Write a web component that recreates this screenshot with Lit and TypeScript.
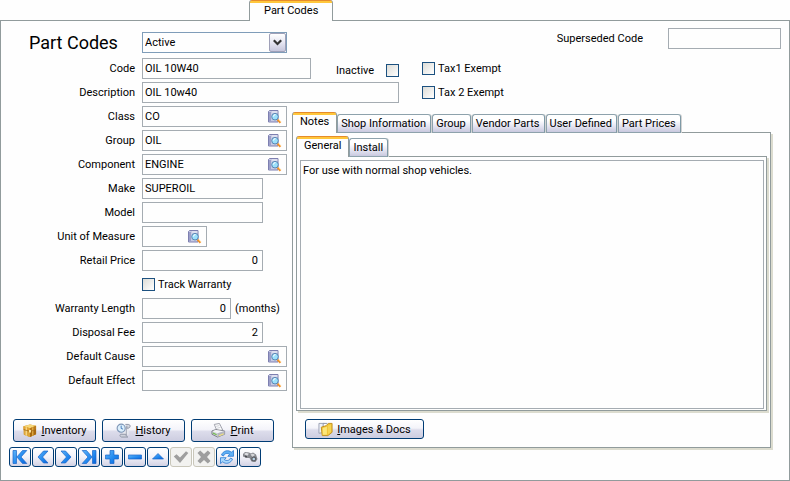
import { LitElement, html, css, svg, type TemplateResult } from "lit";
import { customElement } from "lit/decorators.js";
import { classMap } from "lit/directives/class-map.js";

const magnifier = html`<svg width="14" height="14" viewBox="0 0 14 14" aria-hidden="true">
  <path d="M.5 1.500L1.500.5h8.500v11.500H.5z" fill="#c9cbe4" stroke="#7d7fb0" />
  <path d="M1 2h2v9.500H1z" fill="#9c9fc9" />
  <path d="M4 1.500h5.500v1H4z" fill="#f1f1fa" />
  <path d="M9.500 9.500l3 3.200" stroke="#f0922b" stroke-width="2.200" />
  <path d="M10.500 9.500l2.500 2.500" stroke="#ffd08a" />
  <circle cx="7" cy="6.700" r="3.300" fill="#9be0fb" stroke="#5a86b4" />
  <path d="M5.500 6.500a2 2 0 0 1 2-2" stroke="#fff" fill="none" />
</svg>`;

const chest = html`<svg width="15" height="15" viewBox="0 0 16 16" aria-hidden="true">
  <path d="M1.500 3.500l7-2L15 3v9l-6.500 3L2 12.500z" fill="#c98a1d" />
  <path d="M1.500 3.500l7-2L15 3 8.500 5.500z" fill="#f6d77a" />
  <path d="M1.500 3.500l7 2V8.500L1.500 6.500z" fill="#e3a534" />
  <path d="M8.500 5.500L15 3v3.500l-6.500 2z" fill="#b9781c" />
  <path d="M2 7.500l6.500 1.500v6L2 12.500z" fill="#dca53a" />
  <path d="M8.500 9L15 7v5l-6.500 3z" fill="#a8690f" />
  <path d="M4.500 4.500v9" stroke="#fbe39c" stroke-width="1.200" />
  <path d="M11.500 4.500v9" stroke="#e9b850" stroke-width="1.200" />
  <path d="M1.500 7l7 2L15 7" fill="none" stroke="#9a6418" stroke-width=".7" />
  <path d="M7.500 7.500h2v2.500h-2z" fill="#fff0b0" />
</svg>`;

const scroll = html`<svg width="15" height="15" viewBox="0 0 16 16" aria-hidden="true">
  <path d="M6 2h7.500v10.500H7z" fill="#e8e9ef" />
  <path d="M11 5v8.500" stroke="#9ea3b2" />
  <path d="M10 1.500h3c3 0 2.500 4 0 4h-1.500V3" fill="#d3d6e0" stroke="#8d93a3" />
  <path d="M5.500 12h5c0 1.500 1 2.500 2 3H6c-2 0-2.500-3-.5-3z" fill="#cfd2dc" stroke="#8d93a3" />
  <circle cx="5.500" cy="5.500" r="4.300" fill="#dceffc" stroke="#7e96b6" stroke-width="1.200" />
  <path d="M5.500 2.800v3l2 .7" fill="none" stroke="#3f76b8" />
</svg>`;

const printer = html`<svg width="15" height="15" viewBox="0 0 16 16" aria-hidden="true">
  <path d="M3.500 1.500l5.500-1 3.500 7-6 1z" fill="#fff" stroke="#9a9ca6" />
  <path d="M5.500 3.500l3.500-.7M6.500 5.500l3.500-.7" stroke="#c9cbd3" />
  <path d="M1 8.500L5 7l9.500 1.500v3.500L7 15l-6-3z" fill="#cfcfd6" stroke="#7c7e88" />
  <path d="M1.500 8.700L5 7.400l9 1.300L7 11z" fill="#f3f3f6" />
  <path d="M7 11l7.500-2.500V12L7 15z" fill="#b5b6c0" />
  <path d="M2 10.700l4 1.800" stroke="#6fc04a" stroke-width="1.200" />
  <path d="M8.500 13.500l5-2" stroke="#f3e27a" stroke-width="1.200" />
</svg>`;

const folder = html`<svg width="15" height="15" viewBox="0 0 16 16" aria-hidden="true">
  <path d="M1 1.500h5.500v9.500L1 12z" fill="#eef0f6" stroke="#9aa1b3" />
  <path d="M5.500 1.500h4l1 1.500v8h-5z" fill="#fff" stroke="#8d93a3" />
  <path d="M3.500 5.500l5-1.500L11 1.500h4v9.500l-4.500 3.500h-6z" fill="#efc235" stroke="#c28f1c" />
  <path d="M5 6.500l4.500-1.500v8.500H5z" fill="#fbe67a" />
  <path d="M10.500 4L14 2.500v8l-3.500 3z" fill="#f6d452" />
</svg>`;

const blue = (shape: TemplateResult) => html`<svg width="16" height="16" viewBox="0 0 16 16" aria-hidden="true">
  <defs>
    <linearGradient id="b" x1="0" y1="0" x2="1" y2="1">
      <stop offset="0" stop-color="#5fb4f8" />
      <stop offset=".6" stop-color="#1f86ee" />
      <stop offset="1" stop-color="#0a62d8" />
    </linearGradient>
  </defs>
  <g fill="url(#b)" stroke="#1a66c8" stroke-width=".7">${shape}</g>
</svg>`;

interface Tool {
  name: string;
  icon: TemplateResult;
  disabled?: boolean;
}

const tools: Tool[] = [
  { name: "First", icon: blue(svg`<path d="M1 1.500h3.500v13H1z M10.500 1.500h4.300L9 8l5.800 6.500h-4.300L4.900 8z" />`) },
  { name: "Previous", icon: blue(svg`<path d="M8.500 2H13L7.500 8l5.500 6H8.500L3 8z" />`) },
  { name: "Next", icon: blue(svg`<path d="M3 2h4.500L13 8l-5.500 6H3l5.500-6z" />`) },
  { name: "Last", icon: blue(svg`<path d="M11.500 1.500H15v13h-3.500z M1.200 1.500h4.300L11.100 8l-5.600 6.500H1.200L7 8z" />`) },
  { name: "Add", icon: blue(svg`<path d="M6 1.500h4V6h4.500v4H10v4.500H6V10H1.500V6H6z" />`) },
  { name: "Remove", icon: blue(svg`<path d="M1.500 6h13v4h-13z" />`) },
  { name: "Edit", icon: blue(svg`<path d="M8 4.500l5.500 5.500h-11z" />`) },
  {
    name: "Post",
    disabled: true,
    icon: html`<svg width="16" height="16" viewBox="0 0 16 16" aria-hidden="true">
      <path d="M.8 7.500l2.700-2.200L7 8.500l6-6.300L15.300 4 7 14z" fill="#9e9e9e" />
    </svg>`,
  },
  {
    name: "Cancel",
    disabled: true,
    icon: html`<svg width="16" height="16" viewBox="0 0 16 16" aria-hidden="true">
      <path d="M1.500 4l2.700-2.500L8 5l3.800-3.500L14.500 4 11 8l3.500 4-2.700 2.500L8 11l-3.800 3.500L1.500 12 5 8z" fill="#9e9e9e" />
    </svg>`,
  },
  {
    name: "Refresh",
    icon: html`<svg width="16" height="16" viewBox="0 0 16 16" aria-hidden="true">
      <path d="M2.500 6C4 1.500 9.500.5 12.300 3.200L14.500 1.500v5.800H8.800l1.800-2C8.800 4 5.500 4 4.500 7z" fill="#5fb0f5" stroke="#2a78d2" stroke-width=".8" />
      <path d="M13.500 10c-1.500 4.500-7 5.500-9.800 2.800L1.500 14.500V8.700h5.700l-1.800 2c1.800 1.300 5.100 1.300 6.100-1.700z" fill="#a8d8fc" stroke="#2a78d2" stroke-width=".8" />
    </svg>`,
  },
  {
    name: "Find",
    icon: html`<svg width="16" height="16" viewBox="0 0 16 16" aria-hidden="true">
      <path d="M1 5l2-2 4 .5L9 4.500l2-1 3 2 1.500 4.500-2 3-4-.5L7.500 9 4.500 9 1 7.500z" fill="#85878d" />
      <path d="M2 5l2-1.300 3 1-2 2.300z" fill="#dddee2" />
      <path d="M8.500 5.500l2.500-1 2 1.500-2.500 2z" fill="#d4d5d9" />
      <circle cx="11.800" cy="10" r="2.500" fill="#5d5f66" />
      <circle cx="11.800" cy="10" r="1.300" fill="#b9d3e6" />
      <circle cx="4" cy="7.500" r="1" fill="#44464c" />
    </svg>`,
  },
];

interface Field {
  id: string;
  label: string;
  value: string;
  kind: "lookup" | "short-lookup" | "text" | "number" | "months";
}

const details: Field[] = [
  { id: "class", label: "Class", value: "CO", kind: "lookup" },
  { id: "group", label: "Group", value: "OIL", kind: "lookup" },
  { id: "component", label: "Component", value: "ENGINE", kind: "lookup" },
  { id: "make", label: "Make", value: "SUPEROIL", kind: "text" },
  { id: "model", label: "Model", value: "", kind: "text" },
  { id: "unit", label: "Unit of Measure", value: "", kind: "short-lookup" },
  { id: "price", label: "Retail Price", value: "0", kind: "number" },
];

const terms: Field[] = [
  { id: "length", label: "Warranty Length", value: "0", kind: "months" },
  { id: "fee", label: "Disposal Fee", value: "2", kind: "number" },
  { id: "cause", label: "Default Cause", value: "", kind: "lookup" },
  { id: "effect", label: "Default Effect", value: "", kind: "lookup" },
];

@customElement("app-root")
export class AppRoot extends LitElement {
  static styles = css`
    * {
      box-sizing: border-box;
    }
    :host {
      display: flex;
      flex-direction: column;
      min-height: 100vh;
      background: #fefefe;
      color: #000;
      font: 11px/13px Roboto, Tahoma, sans-serif;
    }
    button,
    input,
    select,
    textarea {
      font: inherit;
      color: inherit;
      margin: 0;
      border-radius: 0;
    }
    svg {
      display: block;
      flex: none;
    }
    .tabs {
      display: flex;
      align-items: flex-end;
      margin-bottom: -1px;
      position: relative;
    }
    .top {
      padding-left: 249px;
    }
    .tab {
      height: 19px;
      padding: 0 4px 0 3px;
      border: 1px solid #8ea2ac;
      border-right-color: #7f9aa6;
      border-radius: 3px 3px 0 0;
      background: linear-gradient(#fff 30%, #e9e9f4 60%, #c9c9df);
      box-shadow: 1px 0 #d3d3d3;
      margin-right: 1px;
      white-space: nowrap;
    }
    .tab.active {
      height: 21px;
      padding: 0 7px 2px;
      margin-right: 0;
      border-top: 0;
      border-bottom: 0;
      border-color: #919b9c;
      background: linear-gradient(#e68b2c 1px, #ffc73c 1px, #ffc73c 3px, #fefefe 3px);
      box-shadow: none;
    }
    .top .tab.active {
      padding: 0 14px;
    }
    .page {
      flex: 1;
      display: flex;
      flex-direction: column;
      border: 1px solid #919b9c;
      padding: 7px 8px 12px 0;
    }
    .row {
      display: flex;
      align-items: center;
      height: 21px;
      margin-bottom: 3px;
    }
    .row > .caption {
      flex: none;
      width: 134px;
      margin-right: 7px;
      text-align: right;
    }
    .header {
      display: flex;
      justify-content: space-between;
      margin-bottom: 5px;
    }
    .heading {
      display: flex;
      align-items: center;
      margin-top: 4px;
    }
    h1 {
      width: 113px;
      margin: 0 0 0 28px;
      font-size: 18px;
      line-height: 20px;
      font-weight: 400;
      white-space: nowrap;
    }
    .pick {
      position: relative;
      width: 145px;
      height: 21px;
    }
    .pick select {
      appearance: none;
      width: 100%;
      height: 100%;
      padding: 0 20px 0 2px;
      border: 1px solid #7f9db9;
      background: #fefefe;
    }
    .pick .arrow {
      position: absolute;
      top: 1px;
      right: 1px;
      width: 17px;
      height: 19px;
      display: grid;
      place-items: center;
      border: 1px solid #9fa0b8;
      border-radius: 2px;
      background: linear-gradient(#fff, #e6e6f2 50%, #c6c6dc);
      pointer-events: none;
    }
    .superseded {
      display: flex;
      align-items: center;
      gap: 25px;
      height: 21px;
    }
    .box {
      height: 21px;
      border: 1px solid #a5acb2;
      background: #fefefe;
      padding: 0 6px 0 2px;
      outline: 0;
    }
    .w65 {
      width: 65px;
    }
    .w89 {
      width: 89px;
      margin-right: 4px;
    }
    .w113 {
      width: 113px;
    }
    .w121 {
      width: 121px;
    }
    .w145 {
      width: 145px;
    }
    .w169 {
      width: 169px;
    }
    .w257 {
      width: 257px;
    }
    .right {
      text-align: right;
      padding-right: 4px;
    }
    .lookup {
      display: flex;
      align-items: center;
      padding: 0 4px 0 0;
    }
    .lookup input {
      flex: 1;
      min-width: 0;
      border: 0;
      padding: 0 2px;
      background: none;
      outline: 0;
    }
    .lookup button {
      padding: 1px 0 0;
      border: 0;
      background: none;
    }
    .check {
      display: flex;
      align-items: center;
      gap: 3px;
    }
    .check input {
      appearance: none;
      flex: none;
      width: 13px;
      height: 13px;
      border: 1px solid #1c5180;
      background: linear-gradient(135deg, #dcdcd7, #fff);
    }
    .inactive {
      justify-content: space-between;
      width: 63px;
      margin: 3px 0 0 25px;
    }
    .tax {
      margin-left: 23px;
    }
    .body {
      flex: 1;
      display: flex;
      gap: 5px;
    }
    .left {
      flex: none;
      width: 286px;
    }
    .track {
      margin-left: 141px;
      height: 21px;
    }
    .actions {
      display: flex;
      gap: 6px;
      padding: 25px 0 0 12px;
    }
    .push {
      display: flex;
      align-items: center;
      justify-content: center;
      gap: 4px;
      width: 83px;
      height: 23px;
      padding: 0;
      border: 1px solid #003c74;
      border-radius: 3px;
      background: linear-gradient(#fff, #f4f4fa 45%, #dcdceb 55%, #cdcde0);
    }
    .tools {
      display: flex;
      gap: 1px;
      padding: 5px 0 0 8px;
    }
    .tool {
      display: grid;
      place-items: center;
      width: 22px;
      height: 20px;
      padding: 0;
      border: 1px solid #003c74;
      border-radius: 3px;
      background: linear-gradient(#fff, #f2f2f9 50%, #d2d2e4);
    }
    .tool:disabled {
      border-color: #c9c7ba;
      background: #f2f2f0;
    }
    .side {
      flex: 1;
      min-width: 0;
      display: flex;
      flex-direction: column;
      margin: 6px 10px 20px 0;
    }
    .panel {
      flex: 1;
      display: flex;
      flex-direction: column;
      border: 1px solid #919b9c;
      box-shadow: 2px 2px #dcdccf;
      padding: 3px 3px 8px;
    }
    .notes {
      flex: 1;
      display: flex;
      border: 1px solid #919b9c;
      box-shadow: 2px 2px #dcdccf;
      padding: 3px 2px 1px 3px;
    }
    textarea {
      flex: 1;
      border: 1px solid #a5acb2;
      background: #fefefe;
      padding: 3px 2px;
      resize: none;
      outline: 0;
    }
    .docs {
      width: 119px;
      height: 20px;
      margin: 8px 0 0 9px;
    }
  `;

  private tabs(names: string[], label: string, extra = "") {
    return html`<div class="tabs ${extra}" role="tablist" aria-label=${label}>
      ${names.map(
        (name, i) => html`<button
          role="tab"
          aria-selected=${i === 0 ? "true" : "false"}
          class=${classMap({ tab: true, active: i === 0 })}
        >${name}</button>`,
      )}
    </div>`;
  }

  private control(f: Field) {
    switch (f.kind) {
      case "lookup":
      case "short-lookup":
        return html`<div class="box lookup ${f.kind === "lookup" ? "w145" : "w65"}">
          <input id=${f.id} .value=${f.value} />
          <button aria-label="Look up ${f.label}">${magnifier}</button>
        </div>`;
      case "months":
        return html`<input class="box right w89" id=${f.id} .value=${f.value} /><span>(months)</span>`;
      default:
        return html`<input
          class=${classMap({ box: true, w121: true, right: f.kind === "number" })}
          id=${f.id}
          .value=${f.value}
        />`;
    }
  }

  private field(f: Field) {
    return html`<div class="row"><label class="caption" for=${f.id}>${f.label}</label>${this.control(f)}</div>`;
  }

  private push(icon: TemplateResult, name: string, extra = "") {
    return html`<button class="push ${extra}">${icon}<span><u>${name[0]}</u>${name.slice(1)}</span></button>`;
  }

  render() {
    return html`
      ${this.tabs(["Part Codes"], "Windows", "top")}
      <main class="page">
        <div class="header">
          <div class="heading">
            <h1>Part Codes</h1>
            <div class="pick">
              <select aria-label="Status">
                <option>Active</option>
              </select>
              <span class="arrow">
                <svg width="9" height="7" viewBox="0 0 9 7" aria-hidden="true">
                  <path d="M.8 1.200L4.500 5l3.700-3.800" fill="none" stroke="#333" stroke-width="2.200" />
                </svg>
              </span>
            </div>
          </div>
          <div class="superseded">
            <label for="superseded">Superseded Code</label>
            <input class="box w113" id="superseded" />
          </div>
        </div>
        <div class="row">
          <label class="caption" for="code">Code</label>
          <input class="box w169" id="code" .value=${"OIL 10W40"} />
          <label class="check inactive">Inactive<input type="checkbox" /></label>
          <label class="check tax"><input type="checkbox" />Tax1 Exempt</label>
        </div>
        <div class="row">
          <label class="caption" for="description">Description</label>
          <input class="box w257" id="description" .value=${"OIL 10w40"} />
          <label class="check tax"><input type="checkbox" />Tax 2 Exempt</label>
        </div>
        <div class="body">
          <div class="left">
            ${details.map((f) => this.field(f))}
            <div class="row"><label class="check track"><input type="checkbox" />Track Warranty</label></div>
            ${terms.map((f) => this.field(f))}
            <div class="actions">
              ${this.push(chest, "Inventory")} ${this.push(scroll, "History")} ${this.push(printer, "Print")}
            </div>
            <div class="tools">
              ${tools.map(
                (t) => html`<button class="tool" aria-label=${t.name} ?disabled=${t.disabled ?? false}>${t.icon}</button>`,
              )}
            </div>
          </div>
          <div class="side">
            ${this.tabs(
              ["Notes", "Shop Information", "Group", "Vendor Parts", "User Defined", "Part Prices"],
              "Part details",
            )}
            <div class="panel">
              ${this.tabs(["General", "Install"], "Notes")}
              <div class="notes">
                <textarea aria-label="General notes" .value=${"For use with normal shop vehicles."}></textarea>
              </div>
              ${this.push(folder, "Images & Docs", "docs")}
            </div>
          </div>
        </div>
      </main>
    `;
  }
}
